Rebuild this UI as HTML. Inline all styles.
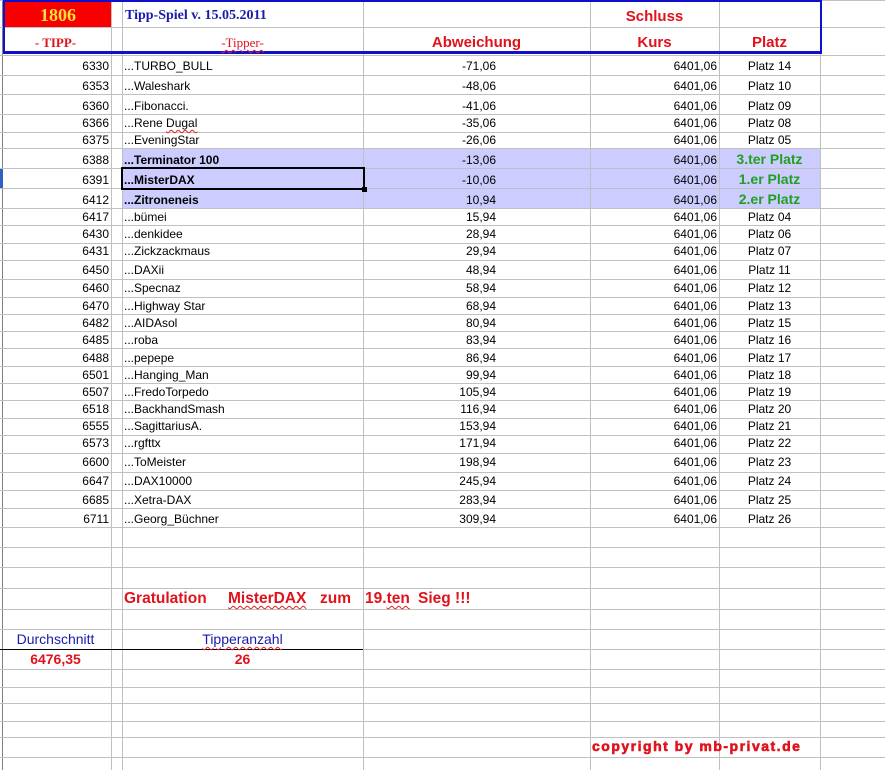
<!DOCTYPE html>
<html><head><meta charset="utf-8"><style>
*{margin:0;padding:0;box-sizing:border-box}
body{width:885px;height:770px;overflow:hidden;background:#fff;position:relative;font-family:"Liberation Sans",Arial,sans-serif;font-size:12px;color:#000}
.h{position:absolute;left:0;width:885px;height:1px;background:#c0c0c0}
.v{position:absolute;top:0;height:770px;width:1px;background:#c0c0c0}
.t{position:absolute;white-space:nowrap;line-height:1}
.r{text-align:right}
.c{text-align:center}
.red{color:#e0121c}
.wavy{text-decoration:underline wavy #e02020;text-decoration-thickness:1px;text-underline-offset:2px}
.g{color:#20a020;font-weight:bold;font-size:14px}
.gr{position:absolute;top:591px;font-weight:bold;font-size:15.5px;color:#e0121c;white-space:nowrap;line-height:1}
</style></head><body>
<div style="position:absolute;left:122px;top:148px;width:698px;height:60px;background:#ccccff"></div>
<div class="v" style="left:2px;background:#808080"></div>
<div style="position:absolute;left:0;top:168px;width:3px;height:20px;background:#3060c0"></div>
<div class="v" style="left:111px"></div>
<div class="v" style="left:122px"></div>
<div class="v" style="left:363px"></div>
<div class="v" style="left:590px"></div>
<div class="v" style="left:719px"></div>
<div class="v" style="left:820px"></div>
<div class="h" style="top:0"></div><div class="h" style="top:27px"></div>
<div class="h" style="top:55px"></div><div class="h" style="top:75px"></div><div class="h" style="top:94px"></div><div class="h" style="top:114px"></div><div class="h" style="top:132px"></div><div class="h" style="top:148px"></div><div class="h" style="top:168px"></div><div class="h" style="top:188px"></div><div class="h" style="top:208px"></div><div class="h" style="top:225px"></div><div class="h" style="top:243px"></div><div class="h" style="top:260px"></div><div class="h" style="top:279px"></div><div class="h" style="top:297px"></div><div class="h" style="top:314px"></div><div class="h" style="top:331px"></div><div class="h" style="top:348px"></div><div class="h" style="top:366px"></div><div class="h" style="top:383px"></div><div class="h" style="top:400px"></div><div class="h" style="top:418px"></div><div class="h" style="top:435px"></div><div class="h" style="top:453px"></div><div class="h" style="top:472px"></div><div class="h" style="top:490px"></div><div class="h" style="top:508px"></div><div class="h" style="top:527px"></div><div class="h" style="top:547px"></div><div class="h" style="top:567px"></div><div class="h" style="top:588px"></div><div class="h" style="top:609px"></div><div class="h" style="top:629px"></div><div class="h" style="top:669px"></div><div class="h" style="top:687px"></div><div class="h" style="top:703px"></div><div class="h" style="top:721px"></div><div class="h" style="top:737px"></div><div class="h" style="top:757px"></div>
<div class="h" style="top:649px;background:#c0c0c0"></div>
<div style="position:absolute;left:0;top:649px;width:363px;height:1px;background:#000"></div>

<div style="position:absolute;left:5px;top:2px;width:106px;height:25px;background:#f80000"></div>
<div style="position:absolute;left:3px;top:0;width:819px;height:54px;border:2px solid #1010cc;border-bottom-width:3px"></div>
<div class="t c" style="left:5px;top:6px;width:106px;font-family:'Liberation Serif',serif;font-weight:bold;font-size:18px;color:#ffe030">1806</div>
<div class="t" style="left:125px;top:9px;font-family:'Liberation Serif',serif;font-weight:bold;font-size:14px;color:#1a1aaa">Tipp-Spiel v. 15.05.2011</div>
<div class="t c red" style="left:590px;top:9px;width:129px;font-weight:bold;font-size:15px">Schluss</div>
<div class="t c red" style="left:0;top:36px;width:111px;font-family:'Liberation Serif',serif;font-weight:bold;font-size:13px">- TIPP-</div>
<div class="t c red" style="left:122px;top:36px;width:241px;font-family:'Liberation Serif',serif;font-size:13px"><span class="wavy">-Tipper-</span></div>
<div class="t c red" style="left:363px;top:35px;width:227px;font-weight:bold;font-size:15px">Abweichung</div>
<div class="t c red" style="left:590px;top:35px;width:129px;font-weight:bold;font-size:15px">Kurs</div>
<div class="t c red" style="left:719px;top:35px;width:101px;font-weight:bold;font-size:15px">Platz</div>

<div class="t r" style="left:0;width:109px;top:60px">6330</div><div class="t" style="left:124px;top:60px">...TURBO_BULL</div><div class="t r" style="left:363px;width:133px;top:60px">-71,06</div><div class="t r" style="left:590px;width:127px;top:60px">6401,06</div><div class="t c" style="left:719px;width:101px;top:60px">Platz 14</div>
<div class="t r" style="left:0;width:109px;top:80px">6353</div><div class="t" style="left:124px;top:80px">...Waleshark</div><div class="t r" style="left:363px;width:133px;top:80px">-48,06</div><div class="t r" style="left:590px;width:127px;top:80px">6401,06</div><div class="t c" style="left:719px;width:101px;top:80px">Platz 10</div>
<div class="t r" style="left:0;width:109px;top:100px">6360</div><div class="t" style="left:124px;top:100px">...Fibonacci.</div><div class="t r" style="left:363px;width:133px;top:100px">-41,06</div><div class="t r" style="left:590px;width:127px;top:100px">6401,06</div><div class="t c" style="left:719px;width:101px;top:100px">Platz 09</div>
<div class="t r" style="left:0;width:109px;top:117px">6366</div><div class="t" style="left:124px;top:117px">...Rene <span class="wavy">Dugal</span></div><div class="t r" style="left:363px;width:133px;top:117px">-35,06</div><div class="t r" style="left:590px;width:127px;top:117px">6401,06</div><div class="t c" style="left:719px;width:101px;top:117px">Platz 08</div>
<div class="t r" style="left:0;width:109px;top:134px">6375</div><div class="t" style="left:124px;top:134px">...EveningStar</div><div class="t r" style="left:363px;width:133px;top:134px">-26,06</div><div class="t r" style="left:590px;width:127px;top:134px">6401,06</div><div class="t c" style="left:719px;width:101px;top:134px">Platz 05</div>
<div class="t r" style="left:0;width:109px;top:154px">6388</div><div class="t" style="left:124px;top:154px;font-weight:bold">...Terminator 100</div><div class="t r" style="left:363px;width:133px;top:154px">-13,06</div><div class="t r" style="left:590px;width:127px;top:154px">6401,06</div><div class="t c g" style="left:719px;width:101px;top:152px">3.ter Platz</div>
<div class="t r" style="left:0;width:109px;top:174px">6391</div><div class="t" style="left:124px;top:174px;font-weight:bold">...MisterDAX</div><div class="t r" style="left:363px;width:133px;top:174px">-10,06</div><div class="t r" style="left:590px;width:127px;top:174px">6401,06</div><div class="t c g" style="left:719px;width:101px;top:172px">1.er Platz</div>
<div class="t r" style="left:0;width:109px;top:194px">6412</div><div class="t" style="left:124px;top:194px;font-weight:bold">...Zitroneneis</div><div class="t r" style="left:363px;width:133px;top:194px">10,94</div><div class="t r" style="left:590px;width:127px;top:194px">6401,06</div><div class="t c g" style="left:719px;width:101px;top:192px">2.er Platz</div>
<div style="position:absolute;left:121px;top:167px;width:244px;height:23px;border:2px solid #000"></div>
<div style="position:absolute;left:362px;top:187px;width:5px;height:5px;background:#000"></div>
<div class="t r" style="left:0;width:109px;top:211px">6417</div><div class="t" style="left:124px;top:211px">...bümei</div><div class="t r" style="left:363px;width:133px;top:211px">15,94</div><div class="t r" style="left:590px;width:127px;top:211px">6401,06</div><div class="t c" style="left:719px;width:101px;top:211px">Platz 04</div>
<div class="t r" style="left:0;width:109px;top:228px">6430</div><div class="t" style="left:124px;top:228px">...denkidee</div><div class="t r" style="left:363px;width:133px;top:228px">28,94</div><div class="t r" style="left:590px;width:127px;top:228px">6401,06</div><div class="t c" style="left:719px;width:101px;top:228px">Platz 06</div>
<div class="t r" style="left:0;width:109px;top:245px">6431</div><div class="t" style="left:124px;top:245px">...Zickzackmaus</div><div class="t r" style="left:363px;width:133px;top:245px">29,94</div><div class="t r" style="left:590px;width:127px;top:245px">6401,06</div><div class="t c" style="left:719px;width:101px;top:245px">Platz 07</div>
<div class="t r" style="left:0;width:109px;top:264px">6450</div><div class="t" style="left:124px;top:264px">...DAXii</div><div class="t r" style="left:363px;width:133px;top:264px">48,94</div><div class="t r" style="left:590px;width:127px;top:264px">6401,06</div><div class="t c" style="left:719px;width:101px;top:264px">Platz 11</div>
<div class="t r" style="left:0;width:109px;top:282px">6460</div><div class="t" style="left:124px;top:282px">...Specnaz</div><div class="t r" style="left:363px;width:133px;top:282px">58,94</div><div class="t r" style="left:590px;width:127px;top:282px">6401,06</div><div class="t c" style="left:719px;width:101px;top:282px">Platz 12</div>
<div class="t r" style="left:0;width:109px;top:300px">6470</div><div class="t" style="left:124px;top:300px">...Highway Star</div><div class="t r" style="left:363px;width:133px;top:300px">68,94</div><div class="t r" style="left:590px;width:127px;top:300px">6401,06</div><div class="t c" style="left:719px;width:101px;top:300px">Platz 13</div>
<div class="t r" style="left:0;width:109px;top:317px">6482</div><div class="t" style="left:124px;top:317px">...AIDAsol</div><div class="t r" style="left:363px;width:133px;top:317px">80,94</div><div class="t r" style="left:590px;width:127px;top:317px">6401,06</div><div class="t c" style="left:719px;width:101px;top:317px">Platz 15</div>
<div class="t r" style="left:0;width:109px;top:334px">6485</div><div class="t" style="left:124px;top:334px">...roba</div><div class="t r" style="left:363px;width:133px;top:334px">83,94</div><div class="t r" style="left:590px;width:127px;top:334px">6401,06</div><div class="t c" style="left:719px;width:101px;top:334px">Platz 16</div>
<div class="t r" style="left:0;width:109px;top:352px">6488</div><div class="t" style="left:124px;top:352px">...pepepe</div><div class="t r" style="left:363px;width:133px;top:352px">86,94</div><div class="t r" style="left:590px;width:127px;top:352px">6401,06</div><div class="t c" style="left:719px;width:101px;top:352px">Platz 17</div>
<div class="t r" style="left:0;width:109px;top:369px">6501</div><div class="t" style="left:124px;top:369px">...Hanging_Man</div><div class="t r" style="left:363px;width:133px;top:369px">99,94</div><div class="t r" style="left:590px;width:127px;top:369px">6401,06</div><div class="t c" style="left:719px;width:101px;top:369px">Platz 18</div>
<div class="t r" style="left:0;width:109px;top:386px">6507</div><div class="t" style="left:124px;top:386px">...FredoTorpedo</div><div class="t r" style="left:363px;width:133px;top:386px">105,94</div><div class="t r" style="left:590px;width:127px;top:386px">6401,06</div><div class="t c" style="left:719px;width:101px;top:386px">Platz 19</div>
<div class="t r" style="left:0;width:109px;top:403px">6518</div><div class="t" style="left:124px;top:403px">...BackhandSmash</div><div class="t r" style="left:363px;width:133px;top:403px">116,94</div><div class="t r" style="left:590px;width:127px;top:403px">6401,06</div><div class="t c" style="left:719px;width:101px;top:403px">Platz 20</div>
<div class="t r" style="left:0;width:109px;top:420px">6555</div><div class="t" style="left:124px;top:420px">...SagittariusA.</div><div class="t r" style="left:363px;width:133px;top:420px">153,94</div><div class="t r" style="left:590px;width:127px;top:420px">6401,06</div><div class="t c" style="left:719px;width:101px;top:420px">Platz 21</div>
<div class="t r" style="left:0;width:109px;top:437px">6573</div><div class="t" style="left:124px;top:437px">...rgfttx</div><div class="t r" style="left:363px;width:133px;top:437px">171,94</div><div class="t r" style="left:590px;width:127px;top:437px">6401,06</div><div class="t c" style="left:719px;width:101px;top:437px">Platz 22</div>
<div class="t r" style="left:0;width:109px;top:456px">6600</div><div class="t" style="left:124px;top:456px">...ToMeister</div><div class="t r" style="left:363px;width:133px;top:456px">198,94</div><div class="t r" style="left:590px;width:127px;top:456px">6401,06</div><div class="t c" style="left:719px;width:101px;top:456px">Platz 23</div>
<div class="t r" style="left:0;width:109px;top:475px">6647</div><div class="t" style="left:124px;top:475px">...DAX10000</div><div class="t r" style="left:363px;width:133px;top:475px">245,94</div><div class="t r" style="left:590px;width:127px;top:475px">6401,06</div><div class="t c" style="left:719px;width:101px;top:475px">Platz 24</div>
<div class="t r" style="left:0;width:109px;top:494px">6685</div><div class="t" style="left:124px;top:494px">...Xetra-DAX</div><div class="t r" style="left:363px;width:133px;top:494px">283,94</div><div class="t r" style="left:590px;width:127px;top:494px">6401,06</div><div class="t c" style="left:719px;width:101px;top:494px">Platz 25</div>
<div class="t r" style="left:0;width:109px;top:513px">6711</div><div class="t" style="left:124px;top:513px">...Georg_Büchner</div><div class="t r" style="left:363px;width:133px;top:513px">309,94</div><div class="t r" style="left:590px;width:127px;top:513px">6401,06</div><div class="t c" style="left:719px;width:101px;top:513px">Platz 26</div>

<div class="gr" style="left:124px">Gratulation</div>
<div class="gr" style="left:228px"><span class="wavy">MisterDAX</span></div>
<div class="gr" style="left:320px">zum</div>
<div class="gr" style="left:365px">19.<span class="wavy">ten</span></div>
<div class="gr" style="left:418px">Sieg !!!</div>
<div class="t c" style="left:0;top:632px;width:111px;font-size:14px;color:#1a1aaa">Durchschnitt</div>
<div class="t c" style="left:122px;top:632px;width:241px;font-size:14px;color:#1a1aaa"><span class="wavy">Tipperanzahl</span></div>
<div class="t c red" style="left:0;top:652px;width:111px;font-weight:bold;font-size:14px">6476,35</div>
<div class="t c red" style="left:122px;top:652px;width:241px;font-weight:bold;font-size:14px">26</div>
<div class="t red" style="left:592px;top:739px;font-weight:bold;font-size:14px;letter-spacing:1.5px;-webkit-text-stroke:0.6px #e0121c">copyright by mb-privat.de</div>
</body></html>
